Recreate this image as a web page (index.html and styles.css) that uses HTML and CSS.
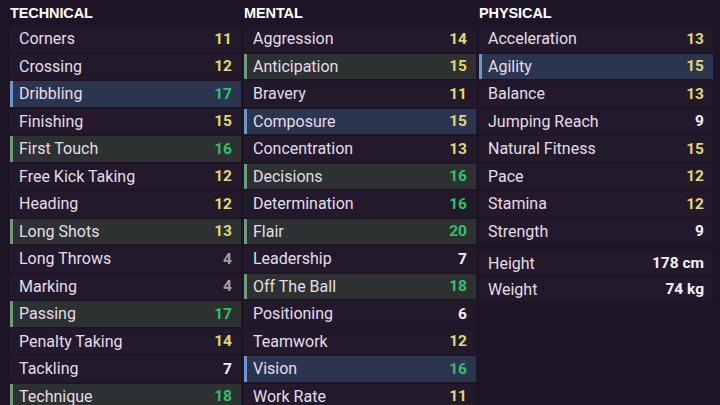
FILE: index.html
```html
<!DOCTYPE html>
<html lang="en">
  <head>
    <meta charset="UTF-8" />
    <meta name="viewport" content="width=device-width, initial-scale=1.0" />
    <title>Attributes</title>
    <link rel="stylesheet" href="styles.css">
  </head>
  <body>
    <div class="attributes">
      <section class="group">
        <h2>TECHNICAL</h2>
        <div class="rows">
          <div class="row"><span>Corners</span><b class="good">11</b></div>
          <div class="row"><span>Crossing</span><b class="good">12</b></div>
          <div class="row blue"><span>Dribbling</span><b class="great">17</b></div>
          <div class="row"><span>Finishing</span><b class="good">15</b></div>
          <div class="row green"><span>First Touch</span><b class="great">16</b></div>
          <div class="row"><span>Free Kick Taking</span><b class="good">12</b></div>
          <div class="row"><span>Heading</span><b class="good">12</b></div>
          <div class="row green"><span>Long Shots</span><b class="good">13</b></div>
          <div class="row"><span>Long Throws</span><b class="poor">4</b></div>
          <div class="row"><span>Marking</span><b class="poor">4</b></div>
          <div class="row green"><span>Passing</span><b class="great">17</b></div>
          <div class="row"><span>Penalty Taking</span><b class="good">14</b></div>
          <div class="row"><span>Tackling</span><b>7</b></div>
          <div class="row green"><span>Technique</span><b class="great">18</b></div>
        </div>
      </section>

      <section class="group">
        <h2>MENTAL</h2>
        <div class="rows">
          <div class="row"><span>Aggression</span><b class="good">14</b></div>
          <div class="row green"><span>Anticipation</span><b class="good">15</b></div>
          <div class="row"><span>Bravery</span><b class="good">11</b></div>
          <div class="row blue"><span>Composure</span><b class="good">15</b></div>
          <div class="row"><span>Concentration</span><b class="good">13</b></div>
          <div class="row green"><span>Decisions</span><b class="great">16</b></div>
          <div class="row"><span>Determination</span><b class="great">16</b></div>
          <div class="row green"><span>Flair</span><b class="great">20</b></div>
          <div class="row"><span>Leadership</span><b>7</b></div>
          <div class="row green"><span>Off The Ball</span><b class="great">18</b></div>
          <div class="row"><span>Positioning</span><b>6</b></div>
          <div class="row"><span>Teamwork</span><b class="good">12</b></div>
          <div class="row blue"><span>Vision</span><b class="great">16</b></div>
          <div class="row"><span>Work Rate</span><b class="good">11</b></div>
        </div>
      </section>

      <section class="group">
        <h2>PHYSICAL</h2>
        <div class="rows">
          <div class="row"><span>Acceleration</span><b class="good">13</b></div>
          <div class="row blue"><span>Agility</span><b class="good">15</b></div>
          <div class="row"><span>Balance</span><b class="good">13</b></div>
          <div class="row"><span>Jumping Reach</span><b>9</b></div>
          <div class="row"><span>Natural Fitness</span><b class="good">15</b></div>
          <div class="row"><span>Pace</span><b class="good">12</b></div>
          <div class="row"><span>Stamina</span><b class="good">12</b></div>
          <div class="row"><span>Strength</span><b>9</b></div>
        </div>
        <div class="rows body-info">
          <div class="row"><span>Height</span><b>178 cm</b></div>
          <div class="row"><span>Weight</span><b>74 kg</b></div>
        </div>
      </section>
    </div>
  </body>
</html>
```

FILE: styles.css
```css
* {
  margin: 0;
  padding: 0;
  box-sizing: border-box;
}

body {
  background-color: #1d1525;
  color: #e4dde8;
  font-family: Roboto, "Liberation Sans", sans-serif;
  width: 720px;
  height: 405px;
  overflow: hidden;
}

.attributes {
  display: grid;
  grid-template-columns: 231px 232px 234px;
  column-gap: 3px;
  padding: 0 8px 0 10px;
}

h2 {
  font-family: "Liberation Sans", sans-serif;
  font-size: 14.5px;
  font-weight: 900;
  color: #ffffff;
  letter-spacing: -0.1px;
  height: 26px;
  line-height: 26px;
}

.rows {
  display: flex;
  flex-direction: column;
  gap: 2px;
}

.row {
  height: 25.5px;
  display: flex;
  align-items: center;
  justify-content: space-between;
  padding: 0 9px 0 9px;
  background-color: #221a2b;
  border-left: 3px solid transparent;
  font-size: 16px;
}

.row span {
  margin-left: -3px;
}

.row b {
  font-weight: 700;
  font-size: 15.5px;
  color: #f2eff4;
}

.row.blue {
  background-color: #2c3550;
  border-left-color: #6e95cc;
}

.row.green {
  background-color: #2d3132;
  border-left-color: #6f9a7c;
}

.good {
  color: #e2d86c !important;
}

.great {
  color: #2ec26c !important;
}

.poor {
  color: #a49fab !important;
}

.body-info {
  margin-top: 7px;
}

.body-info .row {
  height: 24px;
}
```
